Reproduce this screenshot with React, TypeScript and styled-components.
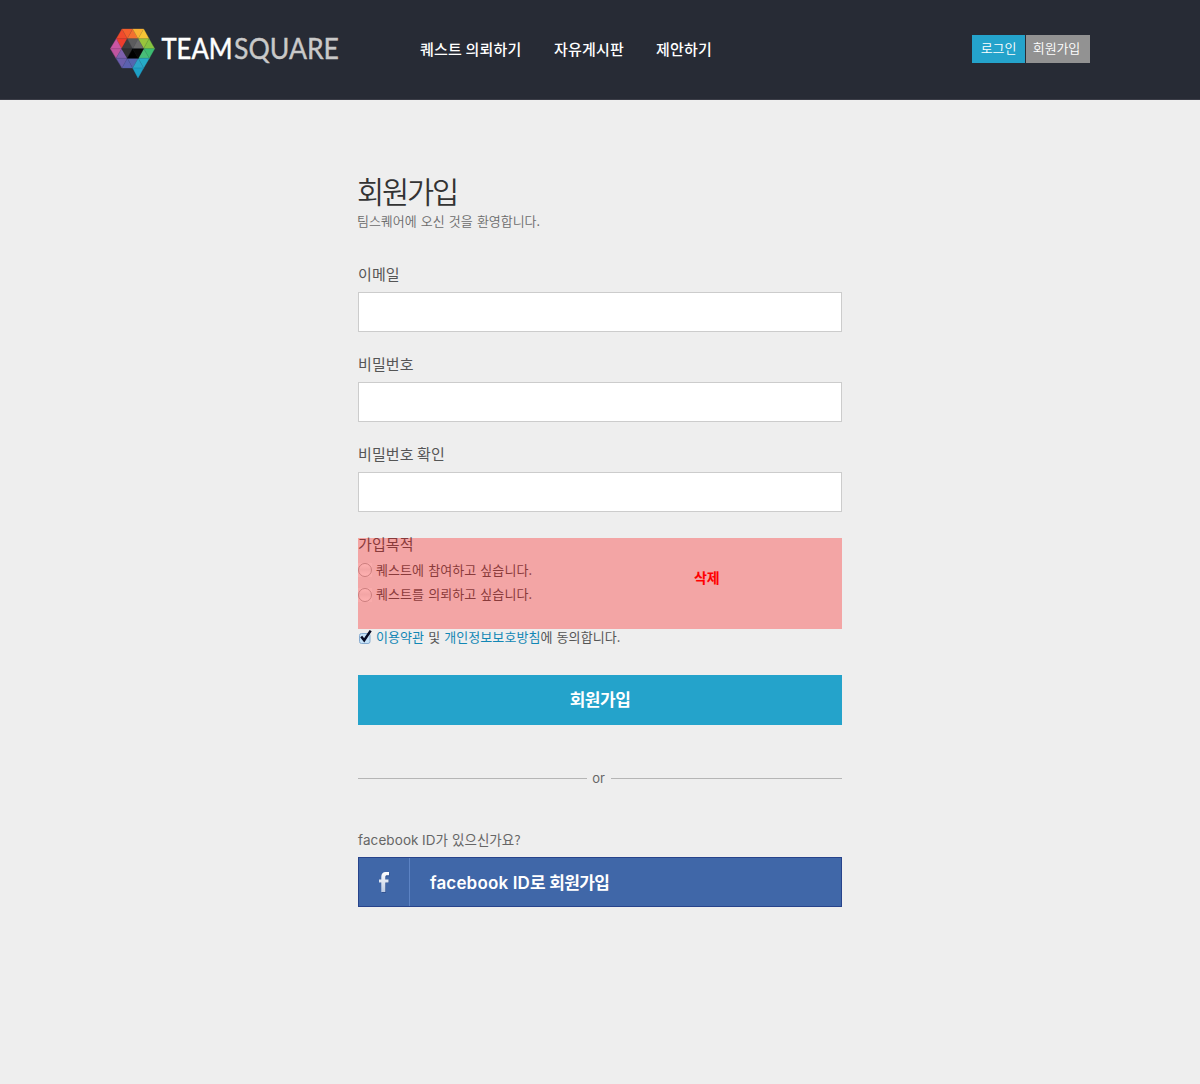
import React from "react";
import styled, { createGlobalStyle } from "styled-components";

const GlobalStyle = createGlobalStyle`
  * { box-sizing: border-box; }
  body {
    margin: 0;
    background: #eeeeee;
    color: #555555;
    font-family: "Liberation Sans", "Noto Sans CJK KR", sans-serif;
  }
`;

const kr = `"Noto Sans CJK KR", sans-serif`;

const Page = styled.div`
  min-height: 1084px;
`;

const Header = styled.header`
  height: 100px;
  background: #272b35;
  border-bottom: 1px solid #3b3d47;
`;

const HeaderInner = styled.div`
  width: 980px;
  height: 99px;
  margin: 0 auto;
  display: flex;
  align-items: flex-start;
`;

const LogoSvg = styled.svg`
  display: block;
  flex: none;
  margin-top: 20px;
`;

const Nav = styled.nav`
  display: flex;
  gap: 32px;
  margin: 37px 0 0 70px;
`;

const NavLink = styled.a<{ $w: number }>`
  width: ${(p) => p.$w}px;
  font: 500 15px/24px ${kr};
  letter-spacing: 0.2px;
  color: #ffffff;
  white-space: nowrap;
`;

const Account = styled.div`
  display: flex;
  gap: 1px;
  margin: 35px 0 0 auto;
`;

const AccountButton = styled.button<{ $bg: string; $w: number; $shift: number }>`
  width: ${(p) => p.$w}px;
  height: 28px;
  padding: 0 ${(p) => p.$shift}px 2px 0;
  border: 0;
  background: ${(p) => p.$bg};
  color: #ffffff;
  font: 350 13px/26px ${kr};
  letter-spacing: -0.1px;
  white-space: nowrap;
`;

const Main = styled.main`
  width: 484px;
  margin: 0 auto;
  padding-top: 68px;
  display: flex;
  flex-direction: column;
`;

const Title = styled.h1`
  margin: 0 0 0 -1px;
  font: 350 29.5px/44px ${kr};
  letter-spacing: -2.1px;
  color: #333333;
`;

const Subtitle = styled.p`
  margin: -1px 0 0 -1px;
  font: 350 13px/20px ${kr};
  letter-spacing: -0.05px;
  word-spacing: 1.4px;
  color: #6c6c6c;
`;

const Form = styled.form`
  display: flex;
  flex-direction: column;
  padding-top: 33px;
`;

const Field = styled.label`
  display: flex;
  flex-direction: column;
  height: 90px;
`;

const Caption = styled.span`
  height: 28px;
  font: 400 15px/20px ${kr};
  letter-spacing: 0.1px;
  color: #555555;
`;

const TextInput = styled.input`
  width: 100%;
  height: 40px;
  padding: 0 10px;
  border: 1px solid #cccccc;
  border-radius: 0;
  outline: 0;
  background: #ffffff;
`;

const Purpose = styled.div`
  position: relative;
  height: 91px;
  margin-top: 4px;
  display: flex;
  flex-direction: column;
`;

const PurposeCaption = styled(Caption)`
  margin-top: -4px;
  height: 25px;
`;

const Choice = styled.div`
  display: flex;
  align-items: center;
  height: 24px;
  gap: 4px;
  font: 400 13px/24px ${kr};
  letter-spacing: 0.08px;
  word-spacing: 1px;
  color: #555555;
  white-space: nowrap;
`;

const ChoiceText = styled.span`
  height: 24px;
  margin-top: -2px;
`;

const RadioBox = styled.span<{ $raise: number }>`
  width: 14px;
  height: 14px;
  margin-top: -${(p) => p.$raise}px;
  background: #f6f6f6;
  display: flex;
`;

const RadioDot = styled.span`
  width: 14px;
  height: 14px;
  border: 1px solid #b4b4b4;
  border-radius: 50%;
  background: linear-gradient(#ffffff, #eeeeee 45%, #ffffff);
`;

const RemovedOverlay = styled.div`
  position: absolute;
  inset: 0;
  background: rgba(255, 4, 4, 0.31);
`;

const RemovedLabel = styled.span`
  position: absolute;
  left: 336px;
  top: 29px;
  font: 700 14px/20px ${kr};
  letter-spacing: -0.2px;
  color: #ff0000;
`;

const Agreement = styled(Choice)`
  margin-top: -3px;
  height: 24px;
`;

const CheckSvg = styled.svg`
  display: block;
  flex: none;
  margin-top: -3px;
`;

const Terms = styled.a`
  color: #1287b5;
`;

const Submit = styled.button`
  margin-top: 25px;
  height: 50px;
  padding: 0 0 2px;
  border: 0;
  background: #24a3cb;
  color: #ffffff;
  font: 700 17px/48px ${kr};
  letter-spacing: -0.5px;
`;

const Divider = styled.div`
  display: flex;
  align-items: center;
  height: 20px;
  margin-top: 43px;
  font: 400 13px/20px Inter, sans-serif;
  color: #666666;
`;

const Rule = styled.span<{ $w: number }>`
  width: ${(p) => p.$w}px;
  height: 1px;
  margin-top: 1px;
  background: #b5b5b5;
`;

const Or = styled.span`
  flex: 1;
  margin: 0 0 0 -1px;
  text-align: center;
`;

const Question = styled.p`
  margin: 39px 0 0;
  height: 30px;
  font: 400 13.5px/24px Inter, ${kr};
  letter-spacing: 0.1px;
  word-spacing: -0.5px;
  color: #666666;
`;

const Hangul = styled.span<{ $size: number; $spacing: number }>`
  font-family: ${kr};
  font-size: ${(p) => p.$size}px;
  letter-spacing: ${(p) => p.$spacing}px;
  word-spacing: 1px;
`;

const FacebookButton = styled.button`
  height: 50px;
  padding: 0;
  border: 1px solid #27438b;
  background: #4067a8;
  display: flex;
  align-items: center;
  color: #ffffff;
  font: 600 17px/48px Inter, ${kr};
  letter-spacing: 0.15px;
  white-space: nowrap;
`;

const FacebookMark = styled.span`
  width: 51px;
  height: 48px;
  border-right: 1px solid #5c83c4;
  display: flex;
  align-items: center;
  justify-content: center;
`;

const FacebookText = styled.span`
  height: 48px;
  padding-left: 20px;
`;

const triangles: [string, string][] = [
  ["66,27 49,56 82,56", "#f04a2c"],
  ["66,27 98,27 82,56", "#f4602d"],
  ["49,56 82,56 65,86", "#ee3d2d"],
  ["98,27 82,56 114,56", "#f3702f"],
  ["98,27 131,27 114,56", "#f9b233"],
  ["131,27 114,56 147,56", "#f6c436"],
  ["114,56 147,56 131,86", "#99c43c"],
  ["147,56 131,86 164,86", "#87c440"],
  ["49,56 31,86 65,86", "#ca55a3"],
  ["31,86 65,86 48,115", "#bf559f"],
  ["65,86 48,115 82,115", "#7d60ac"],
  ["48,115 82,115 66,144", "#6c5eac"],
  ["82,115 66,144 98,144", "#5b61b0"],
  ["82,115 115,115 98,144", "#5465b0"],
  ["131,86 164,86 148,115", "#3dbc72"],
  ["131,86 115,115 148,115", "#48bd78"],
  ["115,115 98,144 131,144", "#2ca5c8"],
  ["115,115 148,115 131,144", "#26abc7"],
  ["98,144 131,144 114,174", "#1d9fc5"],
  ["82,56 65,86 98,86", "#3d3d3f"],
  ["65,86 98,86 82,115", "#303032"],
  ["82,56 114,56 98,86", "#5c5c5e"],
  ["114,56 98,86 131,86", "#6b6b6c"],
  ["98,86 82,115 115,115", "#000000"],
  ["98,86 131,86 115,115", "#080808"],
];

function Logo() {
  return (
    <LogoSvg width="240" height="66" viewBox="10 0 240 66" aria-label="TEAMSQUARE">
      <g transform="scale(0.33333)" strokeWidth="1">
        {triangles.map(([points, fill]) => (
          <polygon key={points} points={points} fill={fill} stroke={fill} />
        ))}
        <path
          d="M49 56H147M31 86H164M48 115H148M98 144H131M66 27L98 86L131 144M98 27L148 115M49 56L98 144M31 86L66 144M98 27L48 115M131 27L66 144M147 56L98 144"
          fill="none"
          stroke="#272b35"
          strokeOpacity="0.22"
          strokeWidth="1.5"
        />
      </g>
      <g fontFamily="Lato" fontSize="28.5">
        <text
          x="61.5"
          y="39"
          textLength="71"
          lengthAdjust="spacingAndGlyphs"
          fill="#ffffff"
          stroke="#ffffff"
          strokeWidth="0.5"
        >
          TEAM
        </text>
        <text
          x="134"
          y="39"
          textLength="105"
          lengthAdjust="spacingAndGlyphs"
          fill="#c9c9c9"
          stroke="#c9c9c9"
          strokeWidth="0.4"
        >
          SQUARE
        </text>
      </g>
    </LogoSvg>
  );
}

function Check() {
  return (
    <CheckSvg width="14" height="16" viewBox="0 0 14 16">
      <rect x="1.5" y="4.5" width="10.5" height="10" rx="2" fill="#c5e2f8" stroke="#86abd0" />
      <path d="M3.2 7.4 L6.2 11.3 L12.7 1.6" fill="none" stroke="#070b24" strokeWidth="2.5" />
    </CheckSvg>
  );
}

function FacebookIcon() {
  return (
    <svg width="14" height="24" viewBox="0 0 14 24">
      <defs>
        <linearGradient id="fb" x1="0" y1="0" x2="0" y2="1">
          <stop offset="0" stopColor="#ffffff" />
          <stop offset="1" stopColor="#bccbe4" />
        </linearGradient>
      </defs>
      <path d="M5 23V13H2.7V10H5V7.5C5 4.4 6.5 3 9.3 3H12.5v3.2H10.5C9.2 6.2 9 6.800 9 8v2h3v3H9v10z" fill="#2c4b87" fillOpacity="0.7" />
      <path d="M4.3 22V12.4H2V9.4h2.3V6.8C4.3 3.5 6 2 8.8 2H12v3.2H10.2C8.8 5.2 8.3 5.8 8.3 7v2.4H11.5v3H8.3V22z" fill="url(#fb)" />
    </svg>
  );
}

function Radio({ raise = 0 }: { raise?: number }) {
  return (
    <RadioBox $raise={raise}>
      <RadioDot />
    </RadioBox>
  );
}

export default function App() {
  return (
    <Page>
      <GlobalStyle />
      <Header>
        <HeaderInner>
          <Logo />
          <Nav>
            <NavLink $w={102}>퀘스트 의뢰하기</NavLink>
            <NavLink $w={70}>자유게시판</NavLink>
            <NavLink $w={56}>제안하기</NavLink>
          </Nav>
          <Account>
            <AccountButton $bg="#24a3cb" $w={53} $shift={0}>로그인</AccountButton>
            <AccountButton $bg="#929292" $w={64} $shift={3}>회원가입</AccountButton>
          </Account>
        </HeaderInner>
      </Header>
      <Main>
        <Title>회원가입</Title>
        <Subtitle>팀스퀘어에 오신 것을 환영합니다.</Subtitle>
        <Form>
          {["이메일", "비밀번호", "비밀번호 확인"].map((label, i) => (
            <Field key={label}>
              <Caption>{label}</Caption>
              <TextInput type={i === 0 ? "email" : "password"} />
            </Field>
          ))}
          <Purpose>
            <PurposeCaption>가입목적</PurposeCaption>
            <Choice>
              <Radio raise={2} />
              <ChoiceText>퀘스트에 참여하고 싶습니다.</ChoiceText>
            </Choice>
            <Choice>
              <Radio />
              <ChoiceText>퀘스트를 의뢰하고 싶습니다.</ChoiceText>
            </Choice>
            <RemovedOverlay />
            <RemovedLabel>삭제</RemovedLabel>
          </Purpose>
          <Agreement>
            <Check />
            <ChoiceText>
              <Terms>이용약관</Terms> 및 <Terms>개인정보보호방침</Terms>에 동의합니다.
            </ChoiceText>
          </Agreement>
          <Submit type="button">회원가입</Submit>
        </Form>
        <Divider>
          <Rule $w={229} />
          <Or>or</Or>
          <Rule $w={231} />
        </Divider>
        <Question>
          facebook ID<Hangul $size={13.5} $spacing={0}>가 있으신가요?</Hangul>
        </Question>
        <FacebookButton type="button">
          <FacebookMark>
            <FacebookIcon />
          </FacebookMark>
          <FacebookText>
            facebook ID<Hangul $size={17} $spacing={-0.6}>로 회원가입</Hangul>
          </FacebookText>
        </FacebookButton>
      </Main>
    </Page>
  );
}
